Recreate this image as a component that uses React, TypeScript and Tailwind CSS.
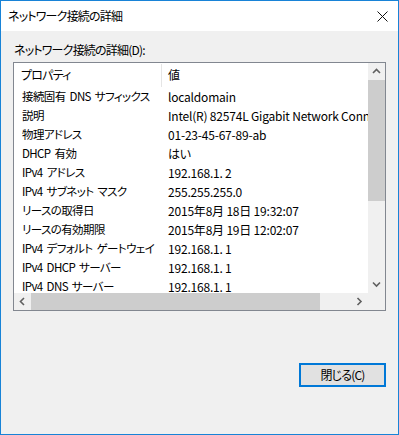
import React from "react";

const rows: [string, string][] = [
	["接続固有 DNS サフィックス", "localdomain"],
	["説明", "Intel(R) 82574L Gigabit Network Connection"],
	["物理アドレス", "01-23-45-67-89-ab"],
	["DHCP 有効", "はい"],
	["IPv4 アドレス", "192.168.1. 2"],
	["IPv4 サブネット マスク", "255.255.255.0"],
	["リースの取得日", "2015年8月 18日 19:32:07"],
	["リースの有効期限", "2015年8月 19日 12:02:07"],
	["IPv4 デフォルト ゲートウェイ", "192.168.1. 1"],
	["IPv4 DHCP サーバー", "192.168.1. 1"],
	["IPv4 DNS サーバー", "192.168.1. 1"],
];

const Chevron = ({ dir }: { dir: "up" | "down" | "left" | "right" }) => {
	const d = {
		up: "M1 5 L4.5 1.5 L8 5",
		down: "M1 1.5 L4.5 5 L8 1.5",
		left: "M5 1 L1.5 4.5 L5 8",
		right: "M1.5 1 L5 4.5 L1.5 8",
	}[dir];
	const vertical = dir === "up" || dir === "down";
	return (
		<svg
			width={vertical ? 9 : 7}
			height={vertical ? 7 : 9}
			viewBox={vertical ? "0 0 9 7" : "0 0 7 9"}
			fill="none"
			stroke="#606060"
			strokeWidth="1.6"
		>
			<path d={d} />
		</svg>
	);
};

export default function App() {
	return (
		<div className="flex h-[435px] w-[399px] flex-col border border-[#1883d7] bg-[#f0f0f0] font-['Noto_Sans_CJK_JP',sans-serif] text-[12px] tracking-[-0.8px] text-black [font-feature-settings:'palt']">
			{/* title bar */}
			<div className="flex h-[30px] shrink-0 items-center justify-between bg-white pl-[7px] pr-[10px]">
				<span className="leading-none">ネットワーク接続の詳細</span>
				<svg width="11" height="11" viewBox="0 0 11 11" stroke="#111" strokeWidth="1">
					<path d="M0.5 0.5 L10.5 10.5 M10.5 0.5 L0.5 10.5" />
				</svg>
			</div>

			<div className="flex flex-1 flex-col px-[12px] pt-[10px]">
				<div className="h-[21px] pl-[1px] leading-[18px]">ネットワーク接続の詳細(D):</div>

				{/* list view */}
				<div className="flex h-[249px] w-[373px] flex-col border border-[#828790] bg-white">
					<div className="flex h-[230px]">
						<div className="w-[354px] overflow-hidden">
							<div className="flex h-[24px] items-center">
								<div className="w-[147px] pl-[7px]">プロパティ</div>
								<div className="h-[23px] w-px self-end bg-[#e5e5e5]" />
								<div className="pl-[6px]">値</div>
							</div>
							{rows.map(([k, v]) => (
								<div key={k} className="flex h-[19px] items-center whitespace-nowrap">
									<div className="w-[148px] shrink-0 pl-[8px] text-[11.5px] tracking-[-0.6px] [word-spacing:2px]">
										{k}
									</div>
									<div className="pl-[6px] tracking-[-0.2px]">{v}</div>
								</div>
							))}
						</div>
						{/* vertical scrollbar */}
						<div className="flex w-[17px] flex-col bg-[#f0f0f0]">
							<div className="flex h-[17px] items-center justify-center">
								<Chevron dir="up" />
							</div>
							<div className="flex-1">
								<div className="h-[121px] bg-[#cdcdcd]" />
							</div>
							<div className="flex h-[17px] items-center justify-center">
								<Chevron dir="down" />
							</div>
						</div>
					</div>
					{/* horizontal scrollbar */}
					<div className="flex h-[17px] bg-[#f0f0f0]">
						<div className="flex w-[17px] items-center justify-center">
							<Chevron dir="left" />
						</div>
						<div className="w-[320px]">
							<div className="h-full w-[289px] bg-[#cdcdcd]" />
						</div>
						<div className="flex w-[17px] items-center justify-center">
							<Chevron dir="right" />
						</div>
						<div className="w-[17px]" />
					</div>
				</div>

				<div className="mt-[52px] flex justify-end">
					<button className="flex h-[24px] w-[87px] items-center justify-center border-2 border-[#0078d7] bg-[#e1e1e1] text-[12px]">
						閉じる(C)
					</button>
				</div>
			</div>
		</div>
	);
}
